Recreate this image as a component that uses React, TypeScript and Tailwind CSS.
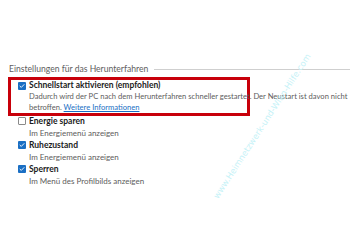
function CheckBox({ checked }: { checked: boolean }) {
  if (!checked) {
    return <span className="w-[8px] h-[8px] shrink-0 rounded-[1px] border border-[#8a8a8a] bg-white" />;
  }
  return (
    <span className="w-[8px] h-[8px] shrink-0 rounded-[1px] bg-[#1a6fc4] flex items-center justify-center">
      <svg width="6" height="6" viewBox="0 0 6 6" fill="none" stroke="white" strokeWidth="0.9" strokeLinecap="round" strokeLinejoin="round">
        <path d="M1 3.2 2.3 4.4 5 1.6" />
      </svg>
    </span>
  );
}

const options = [
  { title: "Energie sparen", sub: "Im Energiemenü anzeigen", checked: false },
  { title: "Ruhezustand", sub: "Im Energiemenü anzeigen", checked: true },
  { title: "Sperren", sub: "Im Menü des Profilbilds anzeigen", checked: true },
];

export default function App() {
  return (
    <div className="relative w-[350px] h-[250px] overflow-hidden bg-white font-['Lato',sans-serif] text-[8px]">
      <div className="pt-[63px]">
        <div className="flex items-center gap-[6px] pl-[9px] h-[12px]">
          <span className="text-[8.6px] text-[#606060] whitespace-nowrap">Einstellungen für das Herunterfahren</span>
          <span className="flex-1 h-px bg-[#cfcfcf]" />
        </div>

        <div className="ml-[8px] mt-[2px] w-[242px] border-[3px] border-[#c8000a] pl-[7px] leading-[11px]">
          <div className="flex items-center gap-[3px]">
            <CheckBox checked />
            <span className="font-bold text-[8.5px] text-[#1b1b1b] whitespace-nowrap">Schnellstart aktivieren (empfohlen)</span>
          </div>
          <p className="pl-[11px] text-[7.6px] text-[#5d5d5d] whitespace-nowrap">
            Dadurch wird der PC nach dem Herunterfahren schneller gestartet. Der Neustart ist davon nicht
            <br />
            betroffen. <span className="text-[#1a6fc4] underline">Weitere Informationen</span>
          </p>
        </div>

        <div className="pl-[18px] -mt-[1px] flex flex-col leading-[12px]">
          {options.map((o) => (
            <div key={o.title}>
              <div className="flex items-center gap-[3px]">
                <CheckBox checked={o.checked} />
                <span className="font-bold text-[8.5px] text-[#1b1b1b]">{o.title}</span>
              </div>
              <p className="pl-[11px] text-[#5d5d5d]">{o.sub}</p>
            </div>
          ))}
        </div>
      </div>

      {/* site watermark */}
      <span className="absolute left-[172px] top-[122px] w-[180px] -rotate-[57deg] text-center text-[8.5px] leading-[8px] text-[#c6f2f7] whitespace-nowrap font-['DejaVu_Sans',sans-serif]">
        www.Heimnetzwerk-und-Wlan-Hilfe.com
      </span>
    </div>
  );
}
